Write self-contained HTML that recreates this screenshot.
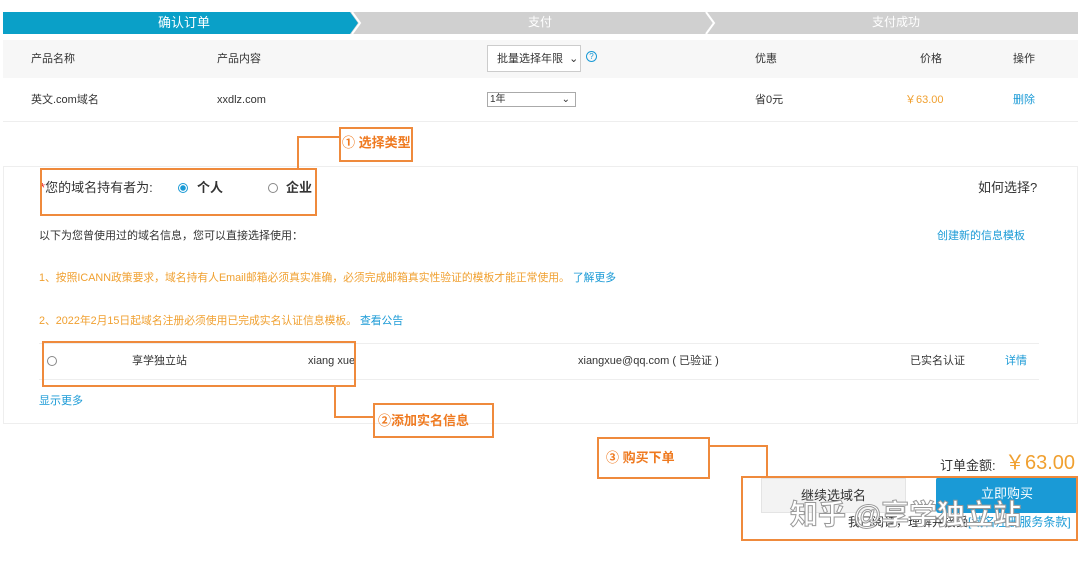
<!DOCTYPE html>
<html><head><meta charset="utf-8"><style>
*{margin:0;padding:0;box-sizing:border-box}
body{width:1080px;height:562px;background:#fff;font-family:"Liberation Sans","Noto Sans CJK SC",sans-serif;font-size:11px;color:#333;position:relative;overflow:hidden}
.a{position:absolute;white-space:nowrap;line-height:1.2}
.ob{position:absolute;border:2px solid #ef8a3c}
.ol{position:absolute;background:#ef8a3c}
.lbl{color:#ef7a20;font-weight:bold;font-size:13px}
.blue{color:#1a9ad6}
.or{color:#f0a030}
.rad{position:absolute;width:10px;height:10px;border:1px solid #888;border-radius:50%;background:#fff}
</style></head><body>
<svg class="a" style="left:3px;top:12px" width="1075" height="22">
<rect x="0" y="0" width="1075" height="22" fill="#d0d0d0"/>
<polygon points="0,0 347,0 355,11 347,22 0,22" fill="#0aa0c8"/>
<polyline points="703,0 711,11 703,22" fill="none" stroke="#fff" stroke-width="2"/>
<polyline points="349,0 357,11 349,22" fill="none" stroke="#fff" stroke-width="2"/>
</svg>
<div class="a" style="left:158px;top:15px;color:#fff;font-size:13px">确认订单</div>
<div class="a" style="left:528px;top:15px;color:#fff;font-size:12px">支付</div>
<div class="a" style="left:872px;top:15px;color:#fff;font-size:12px">支付成功</div>
<div class="a" style="left:3px;top:40px;width:1075px;height:38px;background:#f7f7f7"></div>
<div class="a" style="left:31px;top:53px">产品名称</div>
<div class="a" style="left:217px;top:53px">产品内容</div>
<div class="a" style="left:487px;top:45px;width:94px;height:27px;border:1px solid #ccc;background:#fff;padding:7px 0 0 9px">批量选择年限 &nbsp;⌄</div>
<div class="a" style="left:586px;top:51px;width:11px;height:11px;border:1px solid #1a9ad6;border-radius:50%;color:#1a9ad6;font-size:8px;text-align:center;line-height:9px">?</div>
<div class="a" style="left:755px;top:53px">优惠</div>
<div class="a" style="left:920px;top:53px">价格</div>
<div class="a" style="left:1013px;top:53px">操作</div>
<div class="a" style="left:31px;top:94px">英文.com域名</div>
<div class="a" style="left:217px;top:94px">xxdlz.com</div>
<div class="a" style="left:487px;top:92px;width:89px;height:15px;border:1px solid #aaa;padding:0 0 0 2px;font-size:10px;line-height:13px">1年<span style="position:absolute;right:5px">⌄</span></div>
<div class="a" style="left:755px;top:94px">省0元</div>
<div class="a or" style="left:905px;top:94px">￥63.00</div>
<div class="a blue" style="left:1013px;top:94px">删除</div>
<div class="a" style="left:3px;top:121px;width:1075px;height:1px;background:#eee"></div>
<div class="a" style="left:3px;top:166px;width:1075px;height:258px;border:1px solid #eee"></div>
<div class="a" style="left:40px;top:180px;font-size:13px;color:#333"><span style="color:#e33">*</span>您的域名持有者为:</div>
<div class="rad" style="left:178px;top:183px;border-color:#1a9ad6;background:radial-gradient(#1a9ad6 2.5px,#fff 3px)"></div>
<div class="a" style="left:197px;top:180px;font-size:13px;font-weight:bold">个人</div>
<div class="rad" style="left:268px;top:183px"></div>
<div class="a" style="left:286px;top:180px;font-size:13px;font-weight:bold">企业</div>
<div class="a" style="left:978px;top:180px;font-size:13px">如何选择?</div>
<div class="a" style="left:39px;top:230px">以下为您曾使用过的域名信息，您可以直接选择使用：</div>
<div class="a blue" style="left:937px;top:230px">创建新的信息模板</div>
<div class="a or" style="left:39px;top:272px;font-size:10.8px">1、按照ICANN政策要求，域名持有人Email邮箱必须真实准确，必须完成邮箱真实性验证的模板才能正常使用。 <span class="blue">了解更多</span></div>
<div class="a or" style="left:39px;top:315px;font-size:10.8px">2、2022年2月15日起域名注册必须使用已完成实名认证信息模板。 <span class="blue">查看公告</span></div>
<div class="a" style="left:39px;top:343px;width:1000px;height:1px;background:#eee"></div>
<div class="a" style="left:39px;top:379px;width:1000px;height:1px;background:#eee"></div>
<div class="rad" style="left:47px;top:356px"></div>
<div class="a" style="left:132px;top:355px">享学独立站</div>
<div class="a" style="left:308px;top:355px">xiang xue</div>
<div class="a" style="left:578px;top:355px">xiangxue@qq.com ( 已验证 )</div>
<div class="a" style="left:910px;top:355px">已实名认证</div>
<div class="a blue" style="left:1005px;top:355px">详情</div>
<div class="a blue" style="left:39px;top:395px">显示更多</div>
<div class="ob" style="left:40px;top:168px;width:277px;height:48px"></div>
<div class="ob" style="left:339px;top:127px;width:74px;height:35px"></div>
<div class="ol" style="left:297px;top:136px;width:43px;height:2px"></div>
<div class="ol" style="left:297px;top:136px;width:2px;height:33px"></div>
<div class="a lbl" style="left:342px;top:135px">① 选择类型</div>
<div class="ob" style="left:42px;top:341px;width:314px;height:46px"></div>
<div class="ol" style="left:334px;top:386px;width:2px;height:32px"></div>
<div class="ol" style="left:334px;top:416px;width:40px;height:2px"></div>
<div class="ob" style="left:373px;top:403px;width:121px;height:35px"></div>
<div class="a lbl" style="left:378px;top:413px">②添加实名信息</div>
<div class="ob" style="left:597px;top:437px;width:113px;height:42px"></div>
<div class="a lbl" style="left:606px;top:450px">③ 购买下单</div>
<div class="ol" style="left:709px;top:445px;width:59px;height:2px"></div>
<div class="ol" style="left:766px;top:445px;width:2px;height:32px"></div>
<div class="a" style="left:940px;top:458px;font-size:13px">订单金额:</div>
<div class="a or" style="left:1005px;top:451px;font-size:20px">￥63.00</div>
<div class="a" style="left:761px;top:478px;width:145px;height:35px;background:#f3f3f3;border:1px solid #e4e4e4;text-align:center;line-height:33px;font-size:13px">继续选域名</div>
<div class="a" style="left:936px;top:477px;width:142px;height:36px;background:#1a9ad6;border-radius:3px;color:#fff;text-align:center;line-height:34px;font-size:13px">立即购买</div>
<div class="a" style="left:848px;top:515px;font-size:12px">我已阅读，理解并接受<span class="blue">[域名注册服务条款]</span></div>
<div class="ob" style="left:741px;top:476px;width:337px;height:65px"></div>
<div class="a" style="left:790px;top:498px;font-size:28px;color:#fff;-webkit-text-stroke:1px #999;font-weight:bold">知乎 @享学独立站</div>
</body></html>
